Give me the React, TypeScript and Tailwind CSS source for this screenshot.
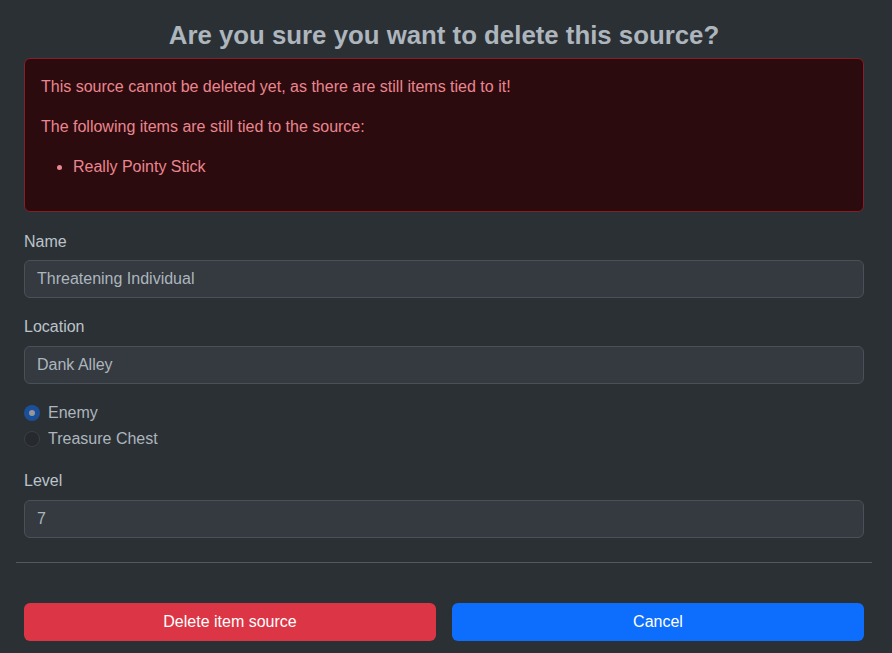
import React from "react";

export default function App() {
  return (
    <div
      className="min-h-[653px] bg-[#2b3035] text-[#dee2e6] text-[16px] leading-6"
      style={{ fontFamily: '"Liberation Sans", Arial, sans-serif' }}
    >
      <div className="pl-4 pr-5 pt-[20px]">
        <div className="px-2">
          <h3 className="text-center text-[25.8px] leading-[31px] font-bold text-[#adb5bd] mb-[7px]">
            Are you sure you want to delete this source?
          </h3>
          <div className="border border-[#842029] bg-[#2c0b0e] text-[#ea868f] rounded-md p-4">
            <p className="mb-4">
              This source cannot be deleted yet, as there are still items tied to it!
            </p>
            <p className="mb-4">The following items are still tied to the source:</p>
            <ul className="list-disc pl-8 mb-4">
              <li>Really Pointy Stick</li>
            </ul>
          </div>

          <div className="mt-[18px]">
            <label className="block mb-[6px] text-[#bcc3ca]">Name</label>
            <div className="h-[38px] rounded-md border border-[#495057] bg-[#343a40] px-3 flex items-center text-[#adb5bd]">
              Threatening Individual
            </div>
          </div>

          <div className="mt-[17px]">
            <label className="block mb-[7px] text-[#bcc3ca]">Location</label>
            <div className="h-[38px] rounded-md border border-[#495057] bg-[#343a40] px-3 flex items-center text-[#adb5bd]">
              Dank Alley
            </div>
          </div>

          <div className="mt-[17px]">
            <div className="flex items-center gap-2 h-6 mb-[2px]">
              <span className="w-4 h-4 rounded-full bg-[#1c4f99] flex items-center justify-center">
                <span className="w-[6px] h-[6px] rounded-full bg-[#95979a]" />
              </span>
              <span className="text-[#adb5bd]">Enemy</span>
            </div>
            <div className="flex items-center gap-2 h-6 mb-[2px]">
              <span className="w-4 h-4 rounded-full bg-[#26292e] border border-[#3a3f44]" />
              <span className="text-[#adb5bd]">Treasure Chest</span>
            </div>
          </div>

          <div className="mt-[18px]">
            <label className="block mb-[7px] text-[#bcc3ca]">Level</label>
            <div className="h-[38px] rounded-md border border-[#495057] bg-[#343a40] px-3 flex items-center text-[#adb5bd]">
              7
            </div>
          </div>
        </div>

        <hr className="mt-6 border-0 border-t border-[#54595e]" />

        <div className="px-2 pt-10 flex gap-4">
          <button className="flex-1 h-[38px] rounded-md bg-[#dc3545] text-white">
            Delete item source
          </button>
          <button className="flex-1 h-[38px] rounded-md bg-[#0d6efd] text-white">
            Cancel
          </button>
        </div>
      </div>
    </div>
  );
}
